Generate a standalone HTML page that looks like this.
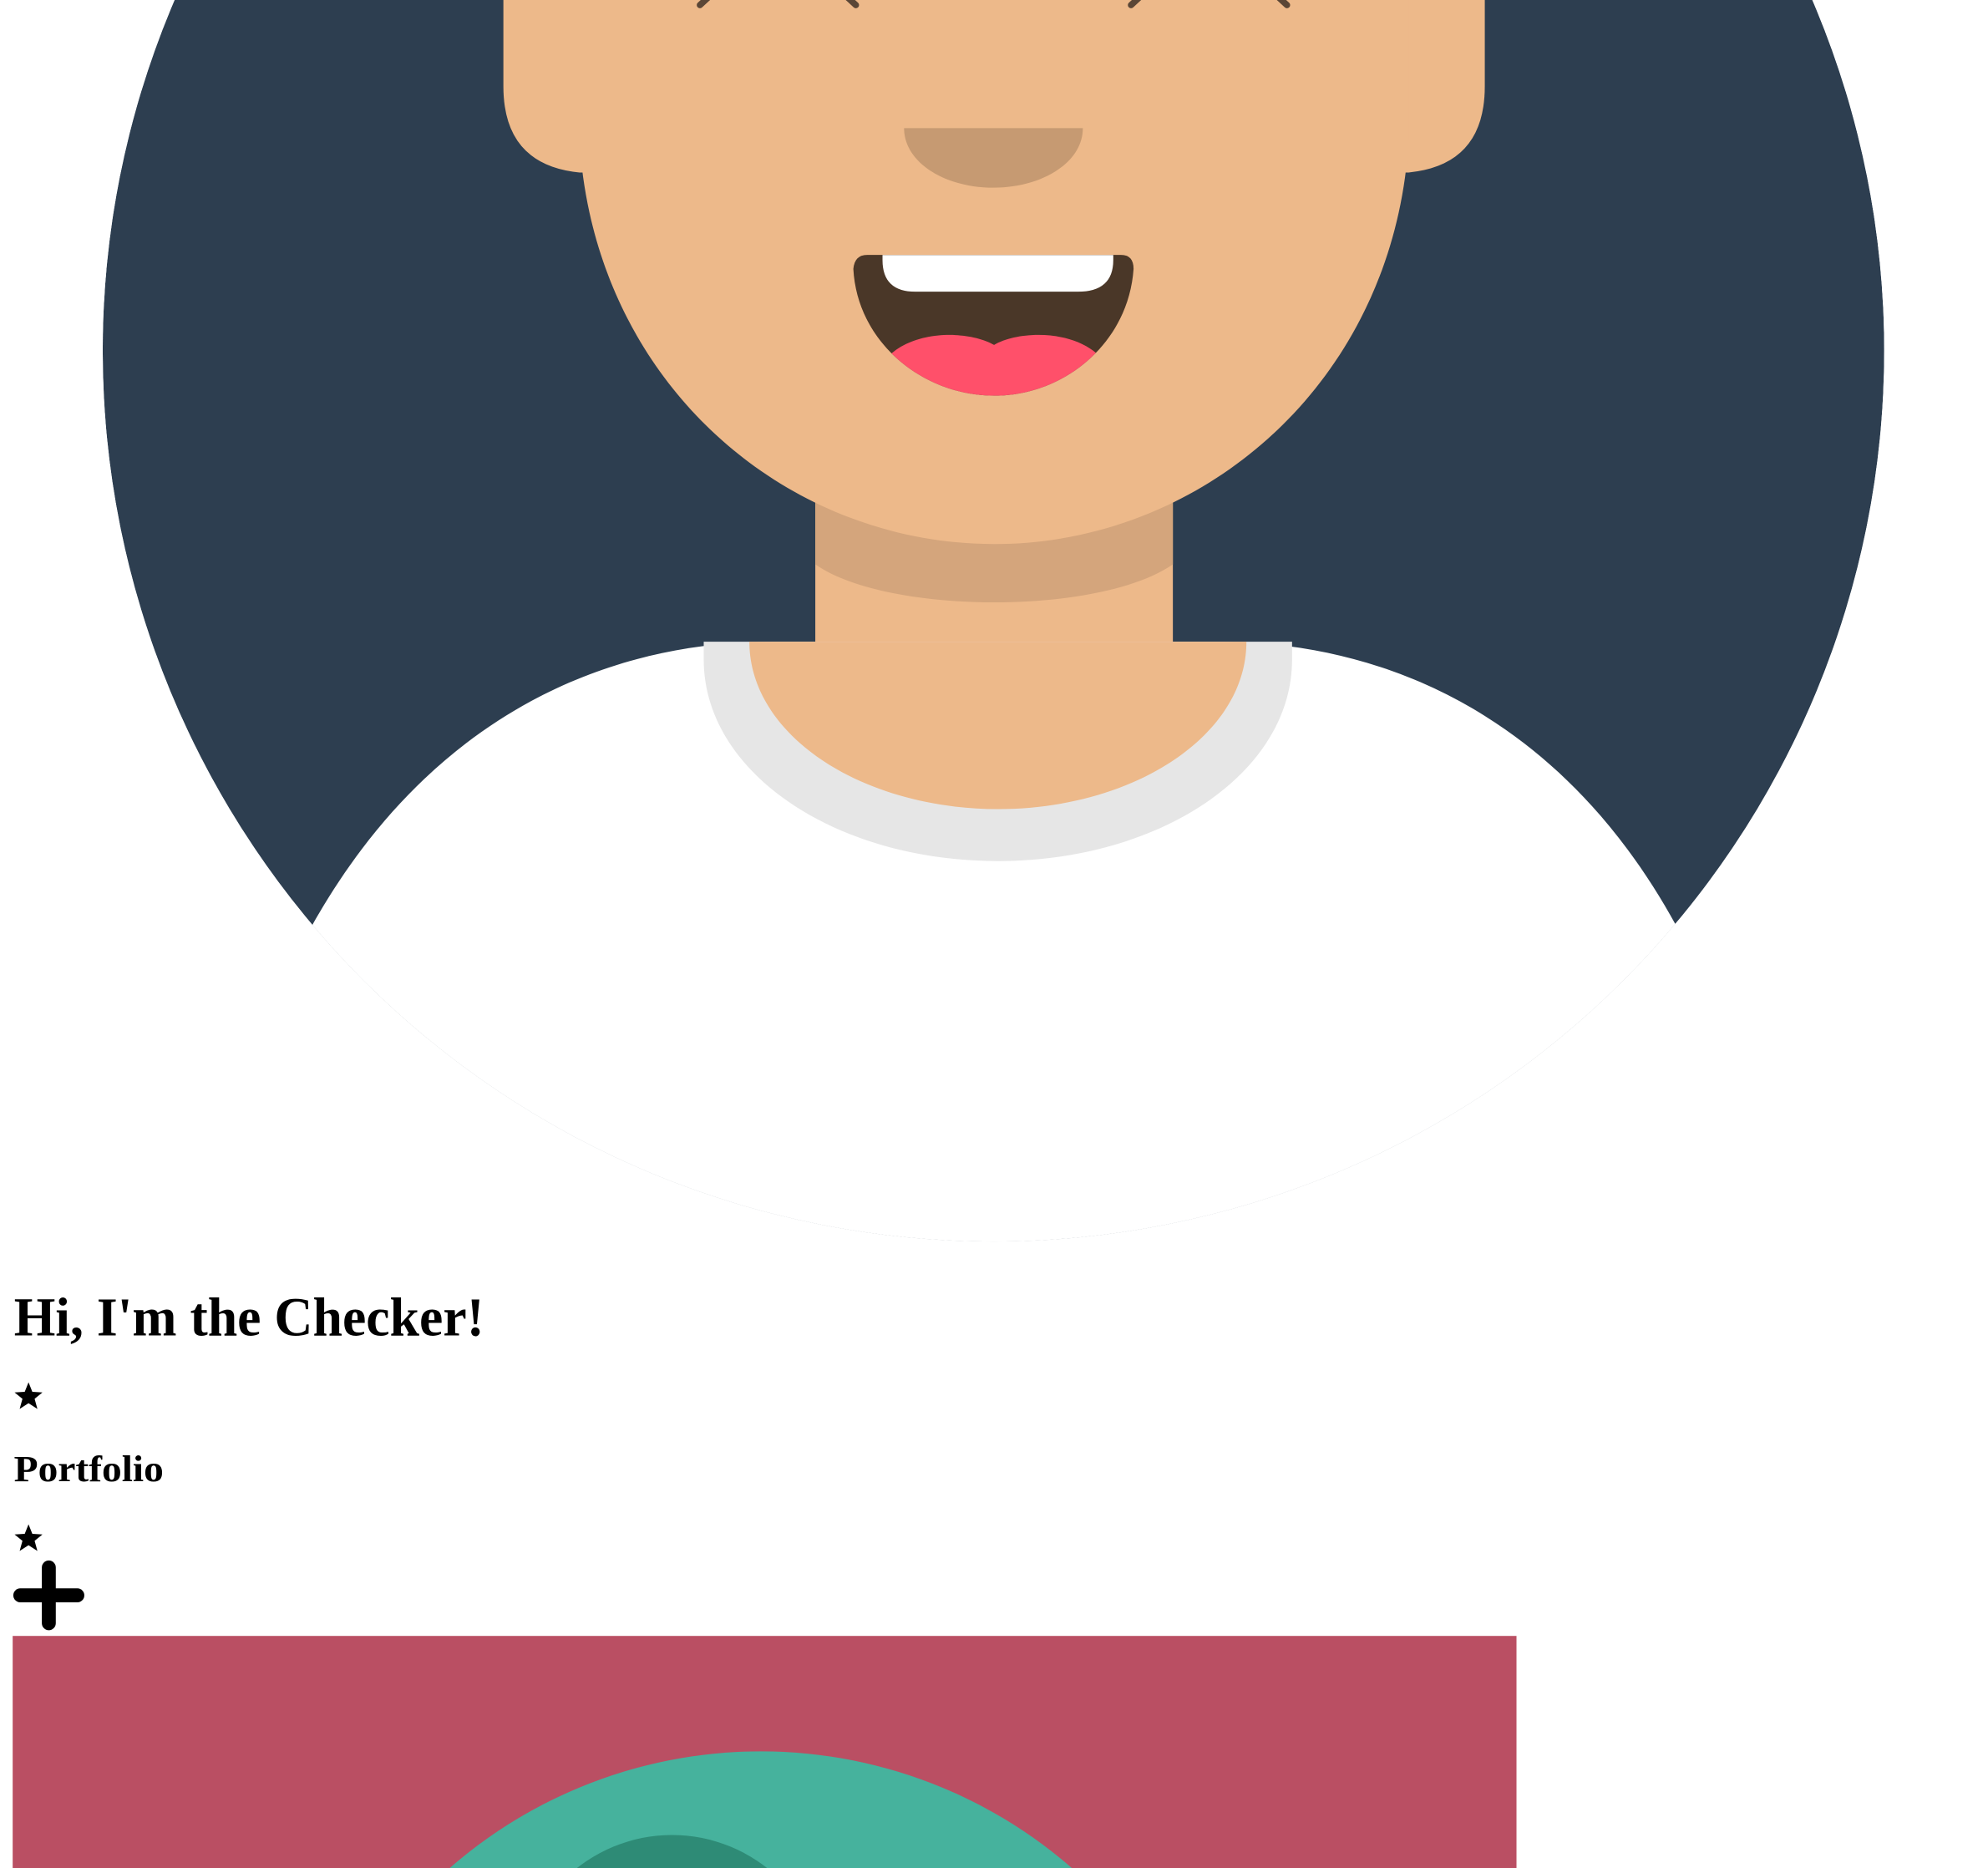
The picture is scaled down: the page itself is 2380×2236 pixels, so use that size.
<!DOCTYPE html>
<html><head><meta charset="utf-8"><style>
html,body{margin:0;padding:0;background:#fff;width:2380px;height:2236px;overflow:hidden}
svg{display:block}
</style></head><body>
<svg width="2380" height="2236" viewBox="0 0 1567.8 1473" preserveAspectRatio="xMinYMin meet" xmlns="http://www.w3.org/2000/svg">
<defs><clipPath id="c"><circle cx="783.5" cy="276.5" r="702.5"/></clipPath>
<clipPath id="m"><path d="M684,201 L884,201 Q894,201 894,212 C890,270 840,312 784,312 C728,312 676,270 673,212 Q674,201 684,201 Z"/></clipPath>
<clipPath id="p"><rect x="10" y="1290" width="1186" height="200"/></clipPath></defs>
<g clip-path="url(#c)">
<circle cx="783.5" cy="276.5" r="702.5" fill="#2d3e50"/>
<rect x="643" y="300" width="282" height="230" fill="#edb98a"/>
<path d="M643,380 C700,440 868,440 925,380 L925,445 C868,485 700,485 643,445 Z" fill="#d4a57c"/>
<path d="M246,730 C330,580 460,506 610,506 L960,506 C1110,506 1240,580 1322,730 L1370,1000 L200,1000 Z" fill="#fff"/>
<path d="M555,506 L555,520 C555,610 660,679 787,679 C914,679 1019,610 1019,520 L1019,506 Z" fill="#e6e6e6"/>
<path d="M591,506 C591,580 680,638 787,638 C894,638 983,580 983,506 Z" fill="#edb98a"/>
<path d="M397,-10 L1171,-10 L1171,68 Q1171,130 1111,136 L457,136 Q397,130 397,68 Z" fill="#edb98a"/>
<path d="M457,-10 L1111,-10 L1111,110 C1100,300 950,429 784,429 C618,429 468,300 457,110 Z" fill="#edb98a"/>
<path d="M713,101 L854,101 C854,128 822,148 783.5,148 C745,148 713,128 713,101 Z" fill="#c69a72"/>
<path d="M684,201 L884,201 Q894,201 894,212 C890,270 840,312 784,312 C728,312 676,270 673,212 Q674,201 684,201 Z" fill="#4a3728"/>
<g clip-path="url(#m)">
<path d="M696,201 L878,201 L878,205 Q878,230 850,230 L722,230 Q696,230 696,205 Z" fill="#fff"/>
<path d="M690,300 C700,260 760,258 784,272 C808,258 868,260 878,300 L878,330 L690,330 Z" fill="#ff506a"/>
</g>
<g stroke="#5a4636" stroke-width="5" stroke-linecap="round" fill="none">
<path d="M552,4 L565,-8"/><path d="M675,4 L662,-8"/>
<path d="M892,4 L905,-8"/><path d="M1015,4 L1002,-8"/>
</g>
</g>
<g font-family="'Liberation Serif',serif" font-weight="bold" fill="#000">
<text x="11" y="1053" font-size="43" textLength="371" lengthAdjust="spacingAndGlyphs">Hi, I'm the Checker!</text>
<text x="11" y="1168" font-size="29" textLength="118" lengthAdjust="spacingAndGlyphs">Portfolio</text>
</g>
<path d="M22.5,1090 L25.5,1097.5 L33.5,1098 L27.3,1103 L29.5,1111 L22.5,1106.5 L15.5,1111 L17.7,1103 L11.5,1098 L19.5,1097.5 Z"/>
<path d="M22.5,1202 L25.5,1209.5 L33.5,1210 L27.3,1215 L29.5,1223 L22.5,1218.5 L15.5,1223 L17.7,1215 L11.5,1210 L19.5,1209.5 Z"/>
<g stroke="#000" stroke-width="11" stroke-linecap="round"><path d="M38.5,1236 L38.5,1280"/><path d="M16,1258 L61,1258"/></g>
<rect x="10" y="1290" width="1186" height="200" fill="#ba4f63"/>
<g clip-path="url(#p)">
<circle cx="600" cy="1754" r="373" fill="#46b29d"/>
<circle cx="530" cy="1568" r="121" fill="#2e8b76"/>
</g>
</svg>
</body></html>
